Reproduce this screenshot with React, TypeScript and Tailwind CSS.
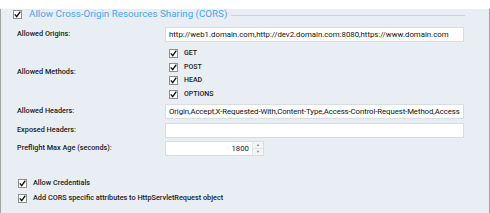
import React from "react"

function Check({ className = "" }: { className?: string }) {
  return (
    <span
      className={`inline-flex h-[9px] w-[9px] shrink-0 items-center justify-center border border-[#8e8f8f] bg-white ${className}`}
    >
      <svg width="7" height="7" viewBox="0 0 7 7">
        <path d="M0.8 3.4 L2.7 5.6 L6.3 0.6" fill="none" stroke="#111" strokeWidth="1.4" />
      </svg>
    </span>
  )
}

function Field({ value = "", className = "" }: { value?: string; className?: string }) {
  return (
    <div
      className={`h-[15px] w-[299px] overflow-hidden whitespace-nowrap border border-[#d9dde2] bg-white pl-[3px] text-[7.8px] font-normal leading-[13px] text-[#111] ${className}`}
    >
      {value}
    </div>
  )
}

const methods = ["GET", "POST", "HEAD", "OPTIONS"]

export default function App() {
  return (
    <div className="h-[213px] w-[490px] border-x border-b border-[#a3a3a3] bg-[#e9eef4] text-[#1a1a1a] font-['Roboto','Liberation_Sans',Arial,sans-serif]">
      <div className="mt-[9px] flex h-[10px] items-center pl-[12px] pr-[24px]">
        <Check />
        <span className="ml-[7px] whitespace-nowrap text-[9.8px] leading-[10px] text-[#45a6ee]">
          Allow Cross-Origin Resources Sharing (CORS)
        </span>
        <div className="ml-[4px] mt-[2px] h-px flex-1 bg-[#cad2db]" />
      </div>

      <div className="mt-[8px] grid grid-cols-[148px_1fr] pl-[16px] text-[7.3px] font-medium">
        <div className="flex h-[15px] items-center">Allowed Origins:</div>
        <Field value="http://web1.domain.com,http://dev2.domain.com:8080,https://www.domain.com" />

        <div className="flex items-center">Allowed Methods:</div>
        <div className="flex flex-col gap-[4.5px] pb-[5px] pl-[4px] pt-[7px]">
          {methods.map((m) => (
            <div key={m} className="flex h-[9px] items-center">
              <Check />
              <span className="ml-[6px] text-[7px]">{m}</span>
            </div>
          ))}
        </div>

        <div className="flex h-[15px] items-center">Allowed Headers:</div>
        <Field
          className="tracking-[-0.09px]"
          value="Origin,Accept,X-Requested-With,Content-Type,Access-Control-Request-Method,Access"
        />

        <div className="mt-[4px] flex h-[15px] items-center">Exposed Headers:</div>
        <Field className="mt-[4px]" />

        <div className="mt-[3px] flex h-[15px] items-center">Preflight Max Age (seconds):</div>
        <div className="mt-[3px] flex h-[15px] w-[99px] border border-[#d9dde2] bg-white">
          <div className="flex-1 pr-[3px] text-right text-[7.8px] font-normal leading-[13px]">1800</div>
          <div className="flex w-[11px] flex-col border-l border-[#e2e5e9] bg-[#f4f5f7]">
            <div className="flex flex-1 items-center justify-center border-b border-[#e2e5e9] text-[4px] leading-none text-[#8a8a8a]">
              ▲
            </div>
            <div className="flex flex-1 items-center justify-center text-[4px] leading-none text-[#8a8a8a]">▼</div>
          </div>
        </div>
      </div>

      <div className="mt-[23px] flex flex-col gap-[6px] pl-[17px] text-[7.3px] font-medium">
        <div className="flex h-[9px] items-center">
          <Check />
          <span className="ml-[6px]">Allow Credentials</span>
        </div>
        <div className="flex h-[9px] items-center">
          <Check />
          <span className="ml-[6px]">Add CORS specific attributes to HttpServletRequest object</span>
        </div>
      </div>
    </div>
  )
}
